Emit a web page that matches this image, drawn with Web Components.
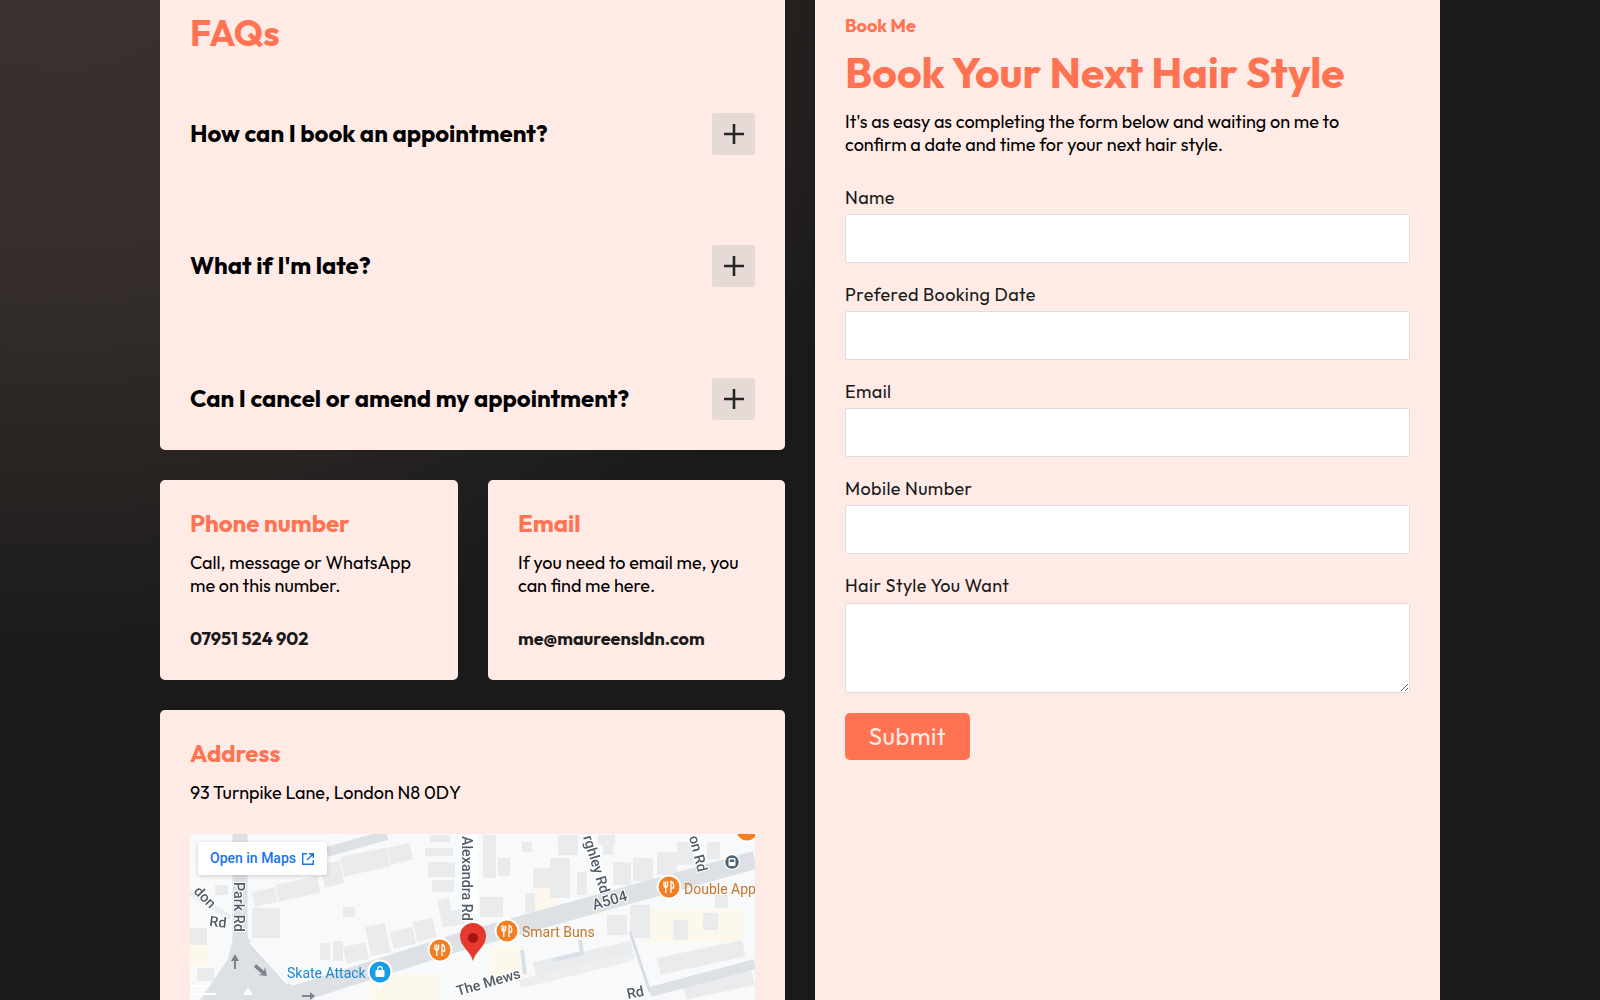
<!DOCTYPE html>
<html lang="en">
<head>
<meta charset="utf-8">
<title>Book Me</title>
<style>
  html, body { margin: 0; height: 1000px; overflow: hidden; }
  body {
    background: radial-gradient(ellipse 900px 720px at 60px -50px, #3a3230 0, #352e2b 45%, #1a1a1a 100%) #1a1a1a;
    font-family: "Outfit", "Lato", sans-serif;
  }
</style>
</head>
<body>
<booking-page>
  <div slot="left">
    <faq-card>
      <faq-item>How can I book an appointment?</faq-item>
      <faq-item>What if I'm late?</faq-item>
      <faq-item>Can I cancel or amend my appointment?</faq-item>
    </faq-card>
    <div class="contact-row" style="display:grid;grid-template-columns:298px 297px;gap:30px;margin-top:30px">
      <info-card heading="Phone number" strong="07951 524 902">Call, message or WhatsApp me on this number.</info-card>
      <info-card heading="Email" strong="me@maureensldn.com">If you need to email me, you can find me here.</info-card>
    </div>
    <address-card></address-card>
  </div>
  <booking-form slot="right">
    <form-field label="Name"></form-field>
    <form-field label="Prefered Booking Date"></form-field>
    <form-field label="Email"></form-field>
    <form-field label="Mobile Number"></form-field>
    <form-field label="Hair Style You Want" multiline></form-field>
  </booking-form>
</booking-page>

<script>
class BookingPage extends HTMLElement {
  constructor() {
    super();
    this.attachShadow({ mode: 'open' }).innerHTML = `
      <style>
        :host { display: grid; grid-template-columns: 625px 625px; gap: 30px; width: 1280px; margin: 0 auto; }
      </style>
      <slot name="left"></slot>
      <slot name="right"></slot>
    `;
  }
}

class FaqCard extends HTMLElement {
  constructor() {
    super();
    this.attachShadow({ mode: 'open' }).innerHTML = `
      <style>
        :host { display: block; background: #ffebe6; border-radius: 0 0 5px 5px; padding: 8px 30px 30px; color: #000; }
        h2 { margin: 0 0 55px; font-size: 36px; line-height: 50px; font-weight: 700; color: #ff7352; }
        .list { display: flex; flex-direction: column; gap: 90px; }
      </style>
      <h2>FAQs</h2>
      <div class="list"><slot></slot></div>
    `;
  }
}

class FaqItem extends HTMLElement {
  constructor() {
    super();
    this.attachShadow({ mode: 'open' }).innerHTML = `
      <style>
        :host { display: flex; align-items: center; justify-content: space-between; height: 42px; font-size: 24px; font-weight: 700; }
        :host(:last-child) { margin-top: 1px; }
        .label { padding-bottom: 2px; }
        .toggle { width: 43px; height: 42px; border-radius: 3px; background: #e6dad6; display: flex; align-items: center; justify-content: center; }
      </style>
      <span class="label"><slot></slot></span>
      <span class="toggle">
        <svg width="22" height="22" viewBox="0 0 22 22" fill="none" stroke="#262626" stroke-width="2.6"><path d="M11 1v20M1 11h20"/></svg>
      </span>
    `;
  }
}

class InfoCard extends HTMLElement {
  constructor() {
    super();
    this.attachShadow({ mode: 'open' }).innerHTML = `
      <style>
        :host { display: block; box-sizing: border-box; height: 200px; background: #ffebe6; border-radius: 5px; padding: 28px 30px 0; color: #000; font-size: 18px; line-height: 23px; }
        h3 { margin: 0 0 13px; font-size: 24px; line-height: 30px; font-weight: 700; color: #ff7352; }
        p { margin: 0; }
        .strong { margin-top: 30px; font-weight: 700; color: #1a1a1a; }
      </style>
      <h3>${this.getAttribute('heading')}</h3>
      <p><slot></slot></p>
      <p class="strong">${this.getAttribute('strong')}</p>
    `;
  }
}

class AddressCard extends HTMLElement {
  constructor() {
    super();
    this.attachShadow({ mode: 'open' }).innerHTML = `
      <style>
        :host { display: block; margin-top: 30px; background: #ffebe6; border-radius: 5px 5px 0 0; padding: 28px 30px 0; color: #000; font-size: 18px; line-height: 23px; }
        h3 { margin: 0 0 13px; font-size: 24px; line-height: 30px; font-weight: 700; color: #ff7352; }
        p { margin: 0 0 30px; }
      </style>
      <h3>Address</h3>
      <p>93 Turnpike Lane, London N8 0DY</p>
      <map-embed></map-embed>
    `;
  }
}

class MapEmbed extends HTMLElement {
  marker(x, y, fill, inner) {
    return `<g transform="translate(${x} ${y})">
      <path d="M-12.500 0a12.500 12.500 0 1 1 25 0c0 6-6 9.500-12.500 14.500C-6.500 9.500-12.500 6-12.500 0z" fill="#fff"/>
      <circle r="10.500" fill="${fill}"/>${inner}</g>`;
  }

  constructor() {
    super();
    const fork = '<path d="M-5 -5.500v4a1.800 1.800 0 0 0 3.600 0v-4M-3.200 -5.500V6M2 6V-5.500c2 .5 3 3 2.600 6.500H2" fill="none" stroke="#fff" stroke-width="1.300"/>';
    const orange = '#f27f21';
    let blocks = '';
    // houses, read off the reference crops: x, y, w, h
    const grey = [[62,74,28,30],[25,51,13,10],[153,73,12,10],[130,109,10,17],[143,107,10,20],[0,94,17,17],[7,134,17,13],
      [235,14,28,8],[238,28,27,15],[242,46,22,12],[240,1,20,7],[293,1,13,43],[308,24,12,18],[332,8,10,10],[343,34,37,20],[360,24,20,40],[387,38,10,23],[368,1,20,20],
      [423,28,18,23],[443,24,20,23],[467,18,20,23],[487,8,17,23],[517,8,13,17],[408,1,17,10],[413,11,10,10],
      [290,63,23,20],[335,59,10,20],[417,81,20,20],[440,71,20,33],[483,86,15,20],[513,79,15,17],[525,61,13,13]];
    grey.forEach(b => { blocks += `<rect x="${b[0]}" y="${b[1]}" width="${b[2]}" height="${b[3]}"/>`; });
    // houses that follow the angle of the streets
    const tilted = [[62,58,23,15],[85,51,43,17],[130,31,20,23],[150,23,47,20],[197,14,23,17],
      [153,113,23,17],[175,93,20,30],[200,98,23,17],[223,88,20,20],[247,66,12,28],[257,78,15,15],
      [467,124,87,17],[493,151,70,15],[343,128,100,18]];
    let tiltedBlocks = '';
    tilted.forEach(b => { tiltedBlocks += `<rect x="${b[0]}" y="${b[1]}" width="${b[2]}" height="${b[3]}" transform="rotate(-12 ${b[0]} ${b[1]})"/>`; });
    this.attachShadow({ mode: 'open' }).innerHTML = `
      <style>
        :host { display: block; position: relative; height: 166px; overflow: hidden; background: #f8f9fa; }
        svg.map { display: block; width: 565px; height: 166px; font-family: Roboto, sans-serif; filter: blur(.35px); }
        .open { position: absolute; left: 8px; top: 8px; width: 129px; height: 33px; box-sizing: border-box; display: flex; align-items: center; justify-content: center; gap: 5px; background: #fff; border-radius: 2px; box-shadow: 0 1px 4px rgba(0,0,0,.18); color: #1a73e8; font: 500 14px/33px Roboto, sans-serif; }
        .road { font-size: 14.300px; font-weight: 500; fill: #4f5b66; paint-order: stroke; stroke: #fff; stroke-width: 2px; }
      </style>
      <svg class="map" viewBox="0 0 565 166">
        <rect width="565" height="166" fill="#f8f9fa"/>
        <g fill="#fdf8ec">
          <rect x="345" y="54" width="22" height="26"/><rect x="300" y="112" width="34" height="34"/>
          <rect x="0" y="108" width="18" height="24"/><rect x="453" y="74" width="100" height="34"/>
          <rect x="395" y="60" width="25" height="20"/><rect x="180" y="140" width="70" height="26"/>
        </g>
        <g fill="#e9ebed">${blocks}${tiltedBlocks}</g>
        <g fill="none" stroke="#fff">
          <path d="M282 0V80" stroke-width="11"/>
          <path d="M397 0L415 58" stroke-width="11"/>
          <path d="M503 0L512 34" stroke-width="10"/>
        </g>
        <g fill="none" stroke="#dde0e4">
          <path d="M137 18L197 1" stroke-width="10"/>
          <path d="M50 0V106" stroke-width="15"/>
          <path d="M100 162L270 108L565 26" stroke-width="18"/>
          <path d="M460 158L565 130" stroke-width="10"/>
          <path d="M0 58L40 84" stroke="#eceef0" stroke-width="6"/>
          <path d="M330 150L440 123" stroke="#eceef0" stroke-width="9"/>
          <path d="M440 98L460 158" stroke="#d9dde2" stroke-width="3"/>
          <path d="M363 126L392 119L390 106" stroke="#d7dfe9" stroke-width="4"/>
          <path d="M332 116L335 140" stroke="#d7dfe9" stroke-width="4"/>
        </g>
        <path d="M43 104H58L100 150L125 166H10L38 125z" fill="#dde0e4"/>
        <path d="M60 108L98 150" fill="none" stroke="#fff" stroke-width="2"/>
        <path d="M58 153l5 8h-10z" fill="#fff"/>
        <path d="M0 152H20M2 160H26" fill="none" stroke="#fff" stroke-width="2"/>
        <g fill="#7b858f">
          <path d="M41 127l4-7 4 7h-3v8h-2v-8z"/>
          <path d="M66 130l8 7 1-4 2 9-9-1 4-1-8-7z"/>
          <path d="M112 161h8v-3l5 4-5 4v-3h-8z"/>
        </g>
        <text class="road" transform="translate(272 2) rotate(90)">Alexandra Rd</text>
        <text class="road" transform="translate(44 48) rotate(90)">Park Rd</text>
        <text class="road" transform="translate(3 58) rotate(45)">don</text>
        <text class="road" transform="translate(19 92) rotate(6)">Rd</text>
        <text class="road" transform="translate(393 3) rotate(73)">rghley Rd</text>
        <text class="road" transform="translate(499 3) rotate(76)">on Rd</text>
        <text class="road" transform="translate(404 76) rotate(-16)" style="font-size:15px">A504</text>
        <text class="road" transform="translate(268 162) rotate(-16)">The Mews</text>
        <text class="road" transform="translate(438 165) rotate(-12)">Rd</text>
        <text x="97" y="144" font-size="14" fill="#1a88d0">Skate Attack</text>
        <text x="332" y="103" font-size="14" fill="#c2772b">Smart Buns</text>
        <text x="494" y="60" font-size="14" fill="#c2772b">Double App</text>
        ${this.marker(250, 116, orange, fork)}
        ${this.marker(317, 97, orange, fork)}
        ${this.marker(479, 53, orange, fork)}
        ${this.marker(557, -4, orange, '')}
        ${this.marker(190, 138, '#1a9be6', '<rect x="-4.500" y="-2" width="9" height="7" rx="1" fill="#fff"/><path d="M-2.300-2v-1a2.300 2.300 0 0 1 4.600 0v1" fill="none" stroke="#fff" stroke-width="1.200"/>')}
        <g transform="translate(542 28)">
          <circle r="8" fill="#fff"/><circle r="6.800" fill="#4e6373"/>
          <rect x="-3.500" y="-4" width="7" height="8" rx="1.500" fill="#fff"/><rect x="-2.300" y="-2.500" width="4.600" height="2.500" fill="#4e6373"/>
        </g>
        <g transform="translate(283 89)">
          <path d="M0 38C-3 27-13 24-13 13a13 13 0 0 1 26 0C13 24 3 27 0 38z" fill="#e5392e"/>
          <circle cy="15" r="5" fill="#a5140f"/>
        </g>
      </svg>
      <div class="open">Open in Maps
        <svg style="width:14px;height:14px" viewBox="0 0 14 14" fill="none" stroke="#1a73e8" stroke-width="1.400"><path d="M6 1.700H1.700v10.600h10.600V8M8 1.700h4.300V6M12.300 1.700L6 8"/></svg>
      </div>
    `;
  }
}

class BookingForm extends HTMLElement {
  constructor() {
    super();
    this.attachShadow({ mode: 'open' }).innerHTML = `
      <style>
        :host { display: block; box-sizing: border-box; height: 1000px; background: #ffebe6; padding: 14px 30px 0; color: #000; }
        .eyebrow { font-size: 18px; line-height: 24px; font-weight: 700; color: #ff7352; }
        h1 { margin: 6px 0 10px; font-size: 42.660px; line-height: 56px; font-weight: 700; color: #ff7352; }
        p { margin: 0 0 30px; font-size: 18px; line-height: 23px; color: #000; }
        .fields { display: flex; flex-direction: column; gap: 20px; }
        button { margin-top: 20px; width: 125px; height: 47px; padding: 0 0 2px; border: 0; border-radius: 5px; background: #ff7352; color: #ffebe6; font: 400 24px "Outfit", "Lato", sans-serif; letter-spacing: .5px; }
      </style>
      <div class="eyebrow">Book Me</div>
      <h1>Book Your Next Hair Style</h1>
      <p>It's as easy as completing the form below and waiting on me to<br>confirm a date and time for your next hair style.</p>
      <div class="fields"><slot></slot></div>
      <button type="button">Submit</button>
    `;
  }
}

class FormField extends HTMLElement {
  constructor() {
    super();
    const control = this.hasAttribute('multiline')
      ? '<textarea></textarea>'
      : '<input type="text">';
    this.attachShadow({ mode: 'open' }).innerHTML = `
      <style>
        :host { display: block; }
        label { display: block; font-size: 18px; line-height: 23px; letter-spacing: .4px; margin-bottom: 5px; color: #1a1a1a; }
        input, textarea { display: block; box-sizing: border-box; width: 565px; margin: 0; background: #fff; border: 1px solid #e0dcdb; border-radius: 1px; outline: 0; }
        input { height: 49px; }
        textarea { height: 90px; margin-top: 6px; resize: vertical; }
      </style>
      <label>${this.getAttribute('label')}</label>
      ${control}
    `;
  }
}

customElements.define('booking-page', BookingPage);
customElements.define('faq-card', FaqCard);
customElements.define('faq-item', FaqItem);
customElements.define('info-card', InfoCard);
customElements.define('map-embed', MapEmbed);
customElements.define('address-card', AddressCard);
customElements.define('booking-form', BookingForm);
customElements.define('form-field', FormField);
</script>
</body>
</html>
